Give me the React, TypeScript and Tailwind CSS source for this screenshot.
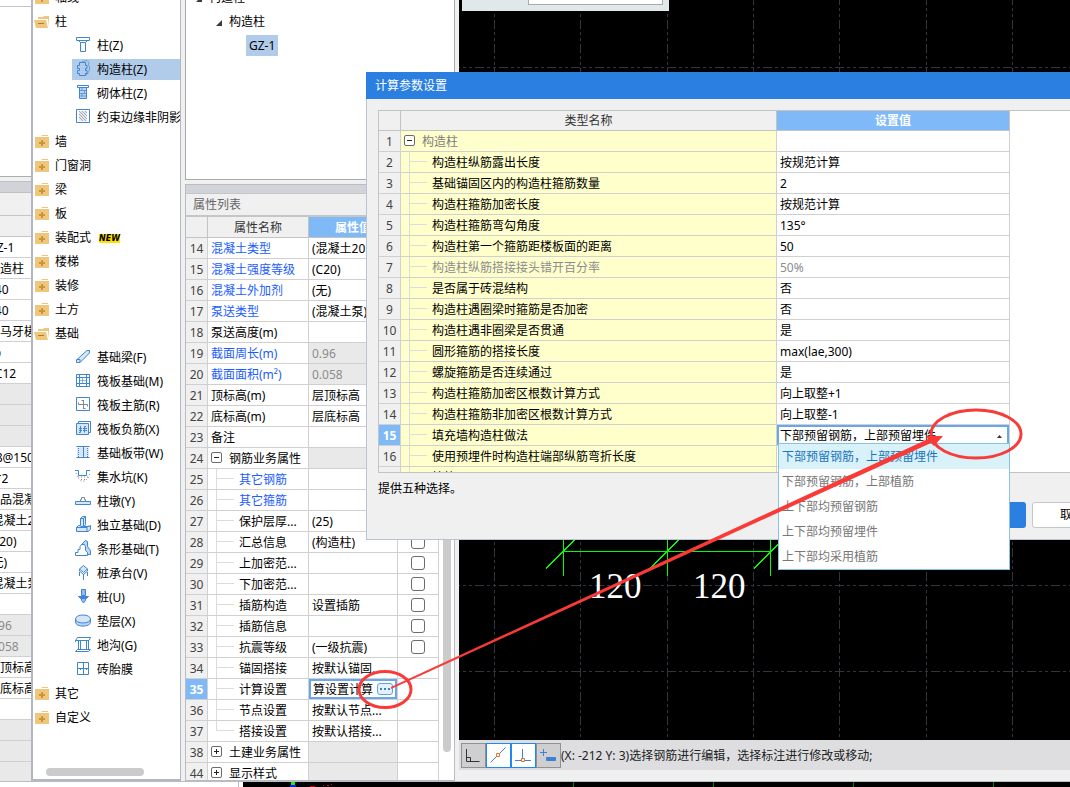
import { ReactNode, useState } from "react";
import { clsx } from "clsx";

type IconName =
  | "column"
  | "tieColumn"
  | "masonryColumn"
  | "edge"
  | "beam"
  | "raft"
  | "raftMain"
  | "raftNegative"
  | "strip"
  | "pit"
  | "pier"
  | "isolated"
  | "stripFooting"
  | "cap"
  | "pile"
  | "cushion"
  | "trench"
  | "brick";

const icons: Record<IconName, ReactNode> = {
  column: (
    <>
      <path d="M1.5 1.5h13v3h-13zM3.5 4.5l2 2h5l2-2" />
      <path d="M5.5 6.5h5v9h-5z" fill="#fff" />
    </>
  ),
  tieColumn: (
    <>
      <path d="M7 1.5l5-1 2 2-1 3 1.5 1v4l-1.500 1v2l-2 1.500" opacity=".6" />
      <path d="M4.500 2.500h6v3h1.500v3h-1.500v2h1.500v3h-1.500v2h-6v-2H2.500v-3h2v-2h-2v-3h2z" />
    </>
  ),
  masonryColumn: (
    <>
      <path d="M2.500 1.500h11v2h-11z" fill="#fff" />
      <path d="M4.500 3.500h7v11h-7z" fill="#b9d5f5" />
      <path d="M4.500 6.500h7M4.500 9.500h7M4.500 12h7M7 3.500v3M9.500 6.500v3M7 9.500v3" opacity=".7" />
    </>
  ),
  edge: (
    <>
      <path d="M1.500 1.500h13v13h-13z" />
      <path d="M4 3h8v10H4z" fill="#e3e6ea" stroke="none" />
      <path d="M4 3l8 8M4 6l7 7M4 9l4 4M7 3l5 5M10 3l2 2" stroke="#a4abb3" />
    </>
  ),
  beam: (
    <>
      <path d="M2 11.500L12 2.500h2.500V5L5 14.500H1.500V12z" fill="#d6e6f8" />
      <path d="M1.500 11.500h3.500v3" />
    </>
  ),
  raft: (
    <>
      <path d="M1.500 2.500h13v12h-13z" />
      <path d="M4.500 2.500v12M11.500 2.500v12M1.500 5.500h13M1.500 11.500h13" />
      <path d="M7.500 5.500v6M4.500 8.500h7" opacity=".6" />
    </>
  ),
  raftMain: (
    <>
      <path d="M1.500 1.500h13v13h-13z" />
      <path
        d="M8.500 4v9M6.500 4.500h2M8.500 12.500h2M3.500 8.500h9M3.500 8.500v-2M12.500 8.500v2"
        stroke="#7f878f"
      />
    </>
  ),
  raftNegative: (
    <>
      <path d="M3.500 3V1.500h12v11H14" />
      <path d="M1.500 3.500h12v11h-12z" fill="#d6e6f8" />
      <path d="M5.500 6v6.500H4M9.500 12.500v-6H11M4 8.500h3M8 8.500h4M4 10.500h3M8 10.500h4" />
    </>
  ),
  strip: (
    <>
      <path d="M2 3.500h12v9H2z" fill="#d6e6f8" stroke="none" />
      <path d="M1.500 2.500h13M1.500 13.500h13M8.500 3v10" />
      <path d="M3.500 4v9M12.500 4v9" strokeDasharray="1 1" />
    </>
  ),
  pit: (
    <>
      <path d="M0 2.500h3.500v5h8v-5H15" />
      <path
        d="M1 5l2 5 3 3h4l3-3 2-5M3 9h10M6 11.500h4"
        stroke="#7f878f"
        strokeDasharray="1 2"
      />
    </>
  ),
  pier: (
    <>
      <path d="M.5 9.500h15v3H.500z" fill="#d6e6f8" />
      <path d="M5.500 9V7.500h1v-2h3v2h1V9" stroke="#7d858e" />
    </>
  ),
  isolated: (
    <>
      <path d="M1.500 11.500l2-2h2v-7l2-2h3v8l-1.500 2H14l1.500-1v4l-2.500 2H1.500z" fill="#d6e6f8" />
      <path d="M5.500 2.500h3v8h-3M1.500 11.500H12v3.500M12 11.500l2-2M8.500 2.500l2-2" />
    </>
  ),
  stripFooting: (
    <>
      <path d="M6.500 4.500l4-4 2 1v5l3 4v4h-3z" fill="#bcd6f4" />
      <path d="M.500 15.500v-3h2.500v-3h2v-3l1.500-2h3l1 2v4l2 2v3z" fill="#fff" />
    </>
  ),
  cap: (
    <>
      <path d="M8.500 1.500l4 3.500-4 3.500-4-3.500z" fill="#d6e6f8" />
      <path d="M4.500 5v2l4 3.500 4-3.500V5M4.500 8v4M8.500 10v6M12.500 8v4" />
    </>
  ),
  pile: (
    <>
      <path d="M6.500 1.500h4v6h-4z" fill="#8fbcf0" />
      <path d="M3.500 8.500h10l-2 2h-6z" fill="#3f85d2" />
      <path d="M6.500 10.500h4v2l-2 2.500-2-2.500z" fill="#8fbcf0" />
    </>
  ),
  cushion: (
    <>
      <path d="M.500 7v3c0 5.500 15 5.500 15 0V7" fill="#bcd6f4" />
      <ellipse cx="8" cy="7" rx="7.500" ry="4" fill="#d6e6f8" />
    </>
  ),
  trench: (
    <>
      <path d="M.500 4.500l2-3h13l-1.500 3zM.500 4.500V6" />
      <path d="M3.500 5v8.500M5.500 5v8M11.500 5v8M13.500 5v8.500M.500 15.500h13l2-2h-13z" />
    </>
  ),
  brick: (
    <>
      <path d="M2.500 2.500h11v12h-11zM8.500 2.500v12M2.500 8.500h11" />
      <path d="M5.500 8v2M11.500 8v2" />
    </>
  ),
};

type TreeNode = { label: string; open?: boolean; isNew?: boolean; icon?: IconName; selected?: boolean };

const treeNodes: TreeNode[] = [
  { label: "轴线" },
  { label: "柱", open: true },
  { label: "柱(Z)", icon: "column" },
  { label: "构造柱(Z)", icon: "tieColumn", selected: true },
  { label: "砌体柱(Z)", icon: "masonryColumn" },
  { label: "约束边缘非阴影区", icon: "edge" },
  { label: "墙" },
  { label: "门窗洞" },
  { label: "梁" },
  { label: "板" },
  { label: "装配式", isNew: true },
  { label: "楼梯" },
  { label: "装修" },
  { label: "土方" },
  { label: "基础", open: true },
  { label: "基础梁(F)", icon: "beam" },
  { label: "筏板基础(M)", icon: "raft" },
  { label: "筏板主筋(R)", icon: "raftMain" },
  { label: "筏板负筋(X)", icon: "raftNegative" },
  { label: "基础板带(W)", icon: "strip" },
  { label: "集水坑(K)", icon: "pit" },
  { label: "柱墩(Y)", icon: "pier" },
  { label: "独立基础(D)", icon: "isolated" },
  { label: "条形基础(T)", icon: "stripFooting" },
  { label: "桩承台(V)", icon: "cap" },
  { label: "桩(U)", icon: "pile" },
  { label: "垫层(X)", icon: "cushion" },
  { label: "地沟(G)", icon: "trench" },
  { label: "砖胎膜", icon: "brick" },
  { label: "其它" },
  { label: "自定义" },
];

// values of the table that the tree panel covers; null is a grey group cell
const hiddenValues: (string | null)[] = [
  "GZ-1", "构造柱", "240", "240", "带马牙槎", "", "4C12", null, null, null,
  "A8@150", "2*2", "商品混凝土", "(混凝土20", "(C20)", "(无)", "(混凝土泵)", "",
  "0.96", "0.058", "层顶标高", "层底标高", "", null, null, null,
];

type Property = {
  no: number;
  name: string;
  value?: string;
  kind?: "group" | "closed" | "child" | "last";
  blue?: boolean;
  readOnly?: boolean;
  check?: boolean;
};

const properties: Property[] = [
  { no: 14, name: "混凝土类型", value: "(混凝土20", blue: true },
  { no: 15, name: "混凝土强度等级", value: "(C20)", blue: true },
  { no: 16, name: "混凝土外加剂", value: "(无)", blue: true },
  { no: 17, name: "泵送类型", value: "(混凝土泵)", blue: true },
  { no: 18, name: "泵送高度(m)" },
  { no: 19, name: "截面周长(m)", value: "0.96", blue: true, readOnly: true },
  { no: 20, name: "截面面积(m²)", value: "0.058", blue: true, readOnly: true },
  { no: 21, name: "顶标高(m)", value: "层顶标高" },
  { no: 22, name: "底标高(m)", value: "层底标高" },
  { no: 23, name: "备注" },
  { no: 24, name: "钢筋业务属性", kind: "group" },
  { no: 25, name: "其它钢筋", kind: "child", blue: true },
  { no: 26, name: "其它箍筋", kind: "child", blue: true },
  { no: 27, name: "保护层厚...", value: "(25)", kind: "child", check: true },
  { no: 28, name: "汇总信息", value: "(构造柱)", kind: "child", check: true },
  { no: 29, name: "上加密范...", kind: "child", check: true },
  { no: 30, name: "下加密范...", kind: "child", check: true },
  { no: 31, name: "插筋构造", value: "设置插筋", kind: "child", check: true },
  { no: 32, name: "插筋信息", kind: "child", check: true },
  { no: 33, name: "抗震等级", value: "(一级抗震)", kind: "child", check: true },
  { no: 34, name: "锚固搭接", value: "按默认锚固...", kind: "child" },
  { no: 35, name: "计算设置", value: "算设置计算", kind: "child" },
  { no: 36, name: "节点设置", value: "按默认节点...", kind: "child" },
  { no: 37, name: "搭接设置", value: "按默认搭接...", kind: "last" },
  { no: 38, name: "土建业务属性", kind: "closed" },
  { no: 44, name: "显示样式", kind: "closed" },
];

const settings = [
  ["构造柱纵筋露出长度", "按规范计算"],
  ["基础锚固区内的构造柱箍筋数量", "2"],
  ["构造柱箍筋加密长度", "按规范计算"],
  ["构造柱箍筋弯勾角度", "135°"],
  ["构造柱第一个箍筋距楼板面的距离", "50"],
  ["构造柱纵筋搭接接头错开百分率", "50%"],
  ["是否属于砖混结构", "否"],
  ["构造柱遇圈梁时箍筋是否加密", "否"],
  ["构造柱遇非圈梁是否贯通", "是"],
  ["圆形箍筋的搭接长度", "max(lae,300)"],
  ["螺旋箍筋是否连续通过", "是"],
  ["构造柱箍筋加密区根数计算方式", "向上取整+1"],
  ["构造柱箍筋非加密区根数计算方式", "向上取整-1"],
  ["填充墙构造柱做法", ""],
  ["使用预埋件时构造柱端部纵筋弯折长度", ""],
  ["植筋", ""],
];

const choices = [
  "下部预留钢筋，上部预留埋件",
  "下部预留钢筋，上部植筋",
  "上下部均预留钢筋",
  "上下部均预留埋件",
  "上下部均采用植筋",
];

function Folder({ open }: { open?: boolean }) {
  return (
    <svg className="h-4 w-4 flex-none" viewBox="0 0 16 16" fill="#efc67c">
      {open ? (
        <>
          <path d="M4 3h5l1-1h5v11l-1-8H4z" />
          <path d="M0 6h12l2 8H2z" />
          <path d="M4 9h6v1H4z" fill="#b07d2a" />
        </>
      ) : (
        <>
          <path d="M8 1h6v1H7z" />
          <path d="M1 3h14v11H1z" />
          <path d="M7 6h2v2h2v2H9v2H7v-2H5V8h2z" fill="#c8963c" />
        </>
      )}
    </svg>
  );
}

function ComponentTree() {
  return (
    <nav className="relative flex w-[150px] flex-none flex-col overflow-hidden border-b-2 border-l-2 border-r border-[#b2b6c2] bg-white">
      <ul className="-mt-[14px]">
        {treeNodes.map((node) => (
          <li key={node.label} className="flex h-6 items-center">
            {node.icon ? (
              <div
                className={clsx(
                  "mt-px ml-[39px] flex h-[21px] flex-1 gap-[6px] self-start overflow-hidden pl-[3px] leading-[22px] whitespace-nowrap",
                  node.selected && "bg-[#b1cbeb]"
                )}
              >
                <svg className="mt-px h-4 w-4 flex-none" viewBox="0 0 16 16" fill="none" stroke="#3f85d2">
                  {icons[node.icon]}
                </svg>
                {node.label}
              </div>
            ) : (
              <div className="flex items-center gap-[5px] pl-[1px]">
                <Folder open={node.open} />
                {node.label}
                {node.isNew && (
                  <span className="ml-[3px] bg-[#ffe100] font-['DejaVu_Sans',sans-serif] text-[8px] leading-[9px] font-bold text-black italic">
                    NEW
                  </span>
                )}
              </div>
            )}
          </li>
        ))}
      </ul>
      <div className="mt-auto mb-[3px] ml-[13px] h-2 w-[98px] rounded-full bg-[#cbcbcb]" />
    </nav>
  );
}

function HiddenPanel() {
  return (
    <div className="flex w-[31px] flex-none flex-col overflow-hidden">
      <div className="h-[7px] flex-none border-b border-[#c3c4c8] bg-white" />
      <div className="h-[170px] flex-none border-b border-[#adadad] bg-white" />
      <div className="mt-1 h-3 flex-none border-y border-[#bfc0c5] bg-[#d2d3d8]" />
      <div className="h-[23px] flex-none border-b border-[#c6c6c6]" />
      <div className="h-[21px] flex-none border-b border-[#c6c6c6]" />
      <table className="-ml-3 w-[80px] flex-none border-separate border-spacing-0">
        <tbody>
          {hiddenValues.map((value, i) => (
            <tr key={i}>
              <td
                className={clsx(
                  "h-[21px] border-b border-[#d0d0d0] p-0 pt-[2px] leading-[18px] whitespace-nowrap",
                  value === null || value.startsWith("0.") ? "bg-[#e9e9e9] text-[#8c8c8c]" : "bg-white"
                )}
              >
                {i === 5 ? <div className="ml-[6px] h-[7px] w-[7px] rounded-full bg-[#4a90d9]" /> : value}
              </td>
            </tr>
          ))}
        </tbody>
      </table>
    </div>
  );
}

// minus / plus box in front of a group name
function Toggle({ closed }: { closed?: boolean }) {
  return (
    <button
      aria-label={closed ? "展开" : "折叠"}
      className="mt-1 mr-[7px] ml-[3px] h-[11px] w-[11px] flex-none rounded-[2px] border border-[#6b6b6b] bg-white"
    >
      <svg viewBox="0 0 9 9" stroke="#222" fill="none">
        <path d={closed ? "M2 4.500h5M4.500 2v5" : "M2 4.500h5"} />
      </svg>
    </button>
  );
}

function Branch({ last }: { last?: boolean }) {
  return (
    <span className={clsx("mr-[5px] ml-2 h-5 w-[18px] flex-none", !last && "border-l border-[#dcdcdc]")}>
      <span className={clsx("block h-[10px] border-b border-[#dcdcdc]", last && "border-l")} />
    </span>
  );
}

function PropertyRow({ row }: { row: Property }) {
  const group = row.kind === "group" || row.kind === "closed";
  const active = row.no === 35;
  const cell = "h-[21px] border-r border-b border-[#d0d0d0] p-0 overflow-hidden whitespace-nowrap";

  return (
    <tr>
      <th
        className={clsx(
          cell,
          active ? "bg-[#80b9f8] font-bold text-white" : "bg-[#f0f0f0] font-normal text-[#444]"
        )}
      >
        <div className="pt-[2px] leading-[18px]">{row.no}</div>
      </th>
      <td className={clsx(cell, "bg-white")}>
        <div className={clsx("flex h-5", row.blue && "text-[#1a5cff]", !row.kind && "pl-[3px]")}>
          {group && <Toggle closed={row.kind === "closed"} />}
          {(row.kind === "child" || row.kind === "last") && <Branch last={row.kind === "last"} />}
          <span className="pt-[2px] leading-[18px]">{row.name}</span>
        </div>
      </td>
      <td className={clsx(cell, group || row.readOnly ? "bg-[#e9e9e9] text-[#8c8c8c]" : "bg-white")}>
        {active ? (
          <div className="flex h-5 items-center border-2 border-[#6aa7ea] pl-[2px]">
            <input
              aria-label={row.name}
              defaultValue={row.value}
              className="mr-[3px] h-4 w-[61px] pt-px leading-4 outline-none"
            />
            <button
              aria-label="更多"
              className="flex h-3 w-4 items-center justify-center gap-[2px] rounded-[3px] border border-[#5ba3e6] bg-[#e4f1fd]"
            >
              <i className="h-[2px] w-[2px] bg-[#3b7fc4]" />
              <i className="h-[2px] w-[2px] bg-[#3b7fc4]" />
              <i className="h-[2px] w-[2px] bg-[#3b7fc4]" />
            </button>
          </div>
        ) : (
          <div className="h-5 pt-[2px] pl-[3px] leading-[18px]">{row.value}</div>
        )}
      </td>
      <td className={clsx(cell, "bg-white")}>
        {row.check && (
          <input
            type="checkbox"
            aria-label={row.name}
            className="mx-auto block h-[14px] w-[14px] appearance-none rounded-[3px] border border-[#6b6b6b] bg-white"
          />
        )}
      </td>
    </tr>
  );
}

function PropertyPanel() {
  const head = "h-[21px] border-r border-b border-[#c3c3c3] p-0 pt-[2px] leading-[18px]";
  return (
    <div className="mx-1 flex w-[270px] flex-none flex-col overflow-hidden">
      <div className="h-[180px] flex-none overflow-hidden border border-t-0 border-[#a9a9a9] bg-white">
        <ul className="-mt-[14px]">
          <li className="flex h-6 items-center gap-[6px] pl-[10px]">
            <Caret />
            构造柱
          </li>
          <li className="flex h-6 items-center gap-[6px] pl-[30px]">
            <Caret />
            构造柱
          </li>
          <li className="flex h-6 pl-[60px]">
            <span className="mt-px h-[21px] bg-[#b1cbeb] px-[3px] leading-[21px]">GZ-1</span>
          </li>
        </ul>
      </div>
      <div className="mt-1 flex min-h-0 flex-1 flex-col border border-[#b9bcc4]">
        <div className="h-[9px] flex-none border-b border-[#c6c6ca] bg-[#d2d3d8]" />
        <h2 className="h-[23px] flex-none border-b-2 border-[#c6c6c6] pl-[7px] leading-[21px] text-[#666]">
          属性列表
        </h2>
        <div className="flex min-h-0 flex-1 overflow-hidden bg-white">
          <table className="w-[253px] flex-none table-fixed border-separate border-spacing-0 self-start">
            <colgroup>
              <col className="w-[22px]" />
              <col className="w-[101px]" />
              <col className="w-[89px]" />
              <col className="w-[41px]" />
            </colgroup>
            <thead>
              <tr>
                <th className={clsx(head, "bg-[#f0f0f0]")} />
                <th className={clsx(head, "bg-[#f0f0f0] font-normal text-[#333]")}>属性名称</th>
                <th className={clsx(head, "bg-[#80b9f8] font-bold text-white")}>属性值</th>
                <th className={clsx(head, "bg-[#f0f0f0] font-normal")}>附加</th>
              </tr>
            </thead>
            <tbody>
              {properties.map((row) => (
                <PropertyRow key={row.no} row={row} />
              ))}
            </tbody>
          </table>
          <div className="mb-7 ml-[4px] w-2 rounded-full bg-[#cbcbcb]" />
        </div>
      </div>
    </div>
  );
}

function Caret() {
  return (
    <svg className="h-[7px] w-[7px]" viewBox="0 0 7 7">
      <path d="M6 1v6H0z" fill="#3a3a3a" />
    </svg>
  );
}

const gridX = [35, 121, 208, 294, 380, 467, 553, 640, 726, 812, 899, 985, 1071, 1158, 1244];
const gridY = [67, 153, 240, 326, 412, 499, 585, 671];

function Drawing() {
  return (
    <div className="relative min-h-0 flex-1 overflow-hidden bg-black">
      <svg className="absolute inset-0 h-full w-full" shapeRendering="crispEdges">
        <g stroke="#2f3641" strokeDasharray="9 3 3 3 3 3">
          {gridX.map((x) => (
            <line key={x} x1={x + 0.5} y1="-4" x2={x + 0.5} y2="2000" />
          ))}
          {gridY.map((y) => (
            <line key={y} x1="-8" y1={y + 0.5} x2="3000" y2={y + 0.5} />
          ))}
        </g>
        <g stroke="#00ff00" fill="none">
          <path d="M104.500 530v46M208.500 530v46M311.500 530v46M104.500 551.500h207" />
          <path d="M87 568.500l31-31M191 568.500l31-31M295 568.500l31-31" />
        </g>
        <g fill="#fff" fontFamily="Liberation Serif, serif" fontSize="35">
          <text x="130" y="598">120</text>
          <text x="234" y="598">120</text>
        </g>
      </svg>
      <div className="relative ml-[3px] flex h-[11px] w-[207px] items-start justify-end bg-[#e1e8ea] pr-[6px]">
        <div className="h-[5px] w-[135px] border border-t-0 border-[#aaa] bg-white" />
      </div>
    </div>
  );
}

function StatusBar() {
  const off = "h-[25px] w-[25px] border border-[#919191] bg-[#cfcfd1]";
  const on = "h-[25px] w-[25px] border border-[#1e88f5] bg-white";
  return (
    <div className="mb-[11px] flex h-[30px] flex-none items-center bg-[#dedee0] pl-[2px] text-[#222]">
      <button aria-label="正交" className={off}>
        <svg viewBox="0 0 23 23" fill="none" stroke="#333">
          <path d="M4.500 5v12.500h13M4.500 13.500h4v4" />
        </svg>
      </button>
      <button aria-label="捕捉中点" className={on}>
        <svg viewBox="0 0 23 23" fill="none" stroke="#3b82d6">
          <path d="M3.500 18.500l15-15" />
          <path d="M9.500 9.500h3v3h-3z" fill="#fff" stroke="#e8742a" />
        </svg>
      </button>
      <button aria-label="捕捉垂点" className={on}>
        <svg viewBox="0 0 23 23" fill="none" stroke="#3b82d6">
          <path d="M10.500 5v11M3 16.500h16" />
          <path d="M9.500 14.500h3v3h-3z" fill="#fff" stroke="#e8742a" />
        </svg>
      </button>
      <button aria-label="坐标输入" className={off}>
        <svg viewBox="0 0 23 23" fill="none" stroke="#3b82d6">
          <path d="M3 8.500h7M6.500 5v7" />
          <path d="M9.500 13.500h9v3h-9z" fill="#3b82d6" />
        </svg>
      </button>
      <span className="pt-[2px] whitespace-nowrap">(X: -212 Y: 3)选择钢筋进行编辑，选择标注进行修改或移动;</span>
    </div>
  );
}

function SettingsDialog() {
  const [choice, setChoice] = useState(choices[0]);
  const head = "h-[20px] border-r border-b border-[#c3c3c3] p-0 pt-px leading-[18px]";
  const cell = "h-[21px] border-r border-b border-[#d0d0d0] p-0 whitespace-nowrap";
  const text = "pt-[2px] leading-[18px]";

  return (
    <div
      role="dialog"
      aria-labelledby="dialog-title"
      className="absolute top-[72px] -right-[54px] left-[366px] flex flex-col border-b border-l border-[#b8c4d4] bg-[#f0f0f0]"
    >
      <h1 id="dialog-title" className="-ml-px h-[27px] bg-[#2b7fe1] pl-[9px] leading-[27px] text-white">
        计算参数设置
      </h1>
      <div className="mt-[11px] ml-[11px] h-[363px] overflow-hidden border border-r-0 border-[#c3c3c3] bg-white">
        <table className="w-[631px] table-fixed border-separate border-spacing-0">
          <colgroup>
            <col className="w-[22px]" />
            <col className="w-[376px]" />
            <col className="w-[233px]" />
          </colgroup>
          <thead>
            <tr>
              <th className={clsx(head, "bg-[#f0f0f0]")} />
              <th className={clsx(head, "bg-[#f0f0f0] font-normal text-[#333]")}>类型名称</th>
              <th className={clsx(head, "bg-[#80b9f8] font-bold text-white")}>设置值</th>
            </tr>
          </thead>
          <tbody>
            <tr>
              <th className={clsx(cell, "bg-[#f0f0f0] font-normal text-[#444]")}>
                <div className={text}>1</div>
              </th>
              <td className={clsx(cell, "bg-[#ffffcc] text-[#7d7d7d]")}>
                <div className="flex h-5">
                  <Toggle />
                  <span className={text}>构造柱</span>
                </div>
              </td>
              <td className={cell} />
            </tr>
            {settings.map(([name, value], i) => {
              const no = i + 2;
              const active = no === 15;
              return (
                <tr key={name} className={no === 7 ? "text-[#8c8c8c]" : ""}>
                  <th
                    className={clsx(
                      cell,
                      active ? "bg-[#80b9f8] font-bold text-white" : "bg-[#f0f0f0] font-normal text-[#444]"
                    )}
                  >
                    <div className={text}>{no}</div>
                  </th>
                  <td className={clsx(cell, "bg-[#ffffcc]")}>
                    <div className="flex h-5">
                      <Branch />
                      <span className={text}>{name}</span>
                    </div>
                  </td>
                  <td className={cell}>
                    {active ? (
                      <div className="relative flex h-5 items-center border-2 border-b-0 border-[#6aa7ea]">
                        <select
                          aria-label={name}
                          value={choice}
                          onChange={(e) => setChoice(e.target.value)}
                          className="h-full w-full appearance-none pl-px leading-[18px] outline-none"
                        >
                          {choices.map((c) => (
                            <option key={c}>{c}</option>
                          ))}
                        </select>
                        <svg className="absolute right-[5px] h-[3px] w-[5px]" viewBox="0 0 5 3">
                          <path d="M0 3L2.500 0 5 3z" fill="#333" />
                        </svg>
                      </div>
                    ) : (
                      <div className={clsx(text, "pl-[3px]")}>{value}</div>
                    )}
                  </td>
                </tr>
              );
            })}
          </tbody>
        </table>
      </div>
      <p className="ml-[11px] h-[29px] leading-[31px]">提供五种选择。</p>
      <div className="mr-3 mb-[11px] flex justify-end gap-[6px]">
        <button className="h-[26px] w-20 rounded-[3px] bg-[#2b7fe1] text-white">确定</button>
        <button className="h-[26px] w-20 rounded-[3px] border border-[#c6c6c6] bg-white">取消</button>
      </div>

      {/* open list of row 15 */}
      <ul
        role="listbox"
        aria-label="填充墙构造柱做法"
        className="absolute top-[371px] left-[411px] w-[232px] border border-[#86c5dd] bg-white text-[#777]"
      >
        {choices.map((c) => (
          <li
            key={c}
            role="option"
            aria-selected={c === choice}
            onClick={() => setChoice(c)}
            className={clsx("h-[25px] pl-[3px] leading-[25px]", c === choice && "bg-[#d9f2fa] text-[#1b75bc]")}
          >
            {c}
          </li>
        ))}
      </ul>
    </div>
  );
}

function Annotation() {
  return (
    <svg className="pointer-events-none absolute inset-0 h-full w-full" fill="none" stroke="#f93a37">
      <ellipse cx="385" cy="689.500" rx="26" ry="18" strokeWidth="3" />
      <ellipse cx="976" cy="434" rx="45" ry="24" strokeWidth="3" />
      <path d="M391 687L928 439l-2-3 17 0-9 10-3-3L391 689z" fill="#f93a37" stroke="none" />
    </svg>
  );
}

export default function App() {
  return (
    <div className="relative flex h-screen flex-col overflow-hidden bg-[#f0f0f0] font-['Noto_Sans','Noto_Sans_CJK_SC',sans-serif] text-[12px] leading-5 text-black">
      <div className="flex min-h-0 flex-1">
        <HiddenPanel />
        <ComponentTree />
        <PropertyPanel />
        <main className="flex min-w-0 flex-1 flex-col">
          <Drawing />
          <StatusBar />
        </main>
      </div>
      <div className="flex h-[6px] flex-none border-t border-[#b9bcc4] bg-white">
        <div className="w-[239px] border-r border-[#b9bcc4]" />
        <svg className="ml-1 h-full flex-1 bg-black" shapeRendering="crispEdges">
          <path d="M48 0h4v3h-4z" fill="#00ff00" />
          <path d="M47 3h6v2h-6z" fill="#1414ff" />
          <path d="M67 4h5M80 3h1M84 3h2M88 2h1" stroke="#e00000" />
          <path d="M330.500 0v5M470.500 0v5M610.500 0v5M750.500 0v5" stroke="#0c7a0c" />
        </svg>
      </div>
      <SettingsDialog />
      <Annotation />
    </div>
  );
}
